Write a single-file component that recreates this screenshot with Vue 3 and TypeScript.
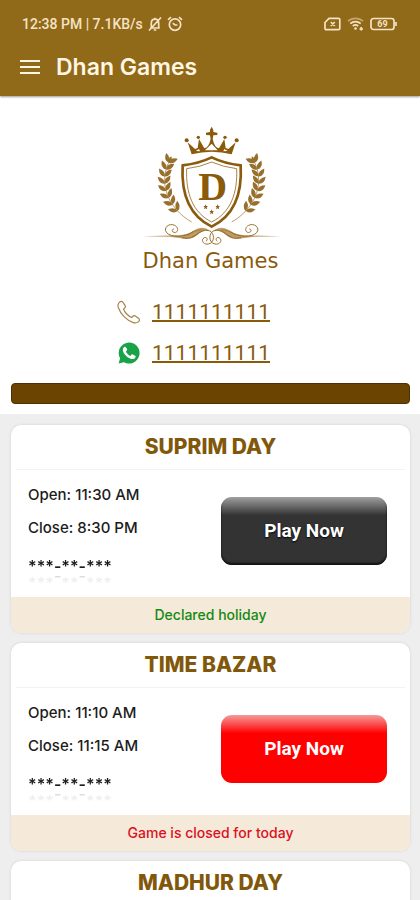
<script setup lang="ts">
interface Game {
  name: string
  open?: string
  close?: string
  result?: string
  status?: string
  closed?: boolean
}

interface Leaf {
  x: number
  y: number
  angle: number
}

const games: Game[] = [
  { name: 'SUPRIM DAY', open: '11:30 AM', close: '8:30 PM', result: '***-**-***', status: 'Declared holiday' },
  { name: 'TIME BAZAR', open: '11:10 AM', close: '11:15 AM', result: '***-**-***', status: 'Game is closed for today', closed: true },
  { name: 'MADHUR DAY' },
]

// Leaf pairs placed along the curved stem of the laurel branch
const leaves: Leaf[] = []
const stem = [[164, 308], [102, 262], [84, 190], [118, 134]]
for (let i = 0; i < 8; i++) {
  const t = 0.14 + i * 0.115
  const u = 1 - t
  const at = (k: number) =>
    u * u * u * stem[0][k] + 3 * u * u * t * stem[1][k] + 3 * u * t * t * stem[2][k] + t * t * t * stem[3][k]
  const slope = (k: number) =>
    u * u * (stem[1][k] - stem[0][k]) + 2 * u * t * (stem[2][k] - stem[1][k]) + t * t * (stem[3][k] - stem[2][k])
  const angle = (Math.atan2(slope(1), slope(0)) * 180) / Math.PI
  leaves.push({ x: at(0), y: at(1), angle: angle - 40 }, { x: at(0), y: at(1), angle: angle + 40 })
}
</script>

<template>
  <div class="app">
    <header class="header">
      <div class="status">
        <span>12:38 PM | 7.1KB/s</span>
        <svg class="ic" width="16" height="16" viewBox="0 0 16 16" aria-hidden="true">
          <path d="M3.2 12h9.6M4.3 11.500V7.200C4.300 4.700 5.800 3.200 8 3.200s3.700 1.500 3.700 4v4.500M6.700 14h2.600M8 3V1.700M2 14.500 14 1.500" />
        </svg>
        <svg class="ic alarm" width="16" height="16" viewBox="0 0 16 16" aria-hidden="true">
          <circle cx="8" cy="8.600" r="5.700" />
          <path d="M1 3.800 4 1.200M15 3.800 12 1.200M5.800 7.200 8 9h2.400" />
        </svg>
        <span class="spacer"></span>
        <svg class="ic" width="17" height="14" viewBox="0 0 17 14" aria-hidden="true">
          <path d="M5 1.300h9.500c.8 0 1.300.5 1.300 1.300v8.800c0 .8-.5 1.300-1.300 1.300H2.300c-.8 0-1.300-.5-1.300-1.300V5.500zM6.800 5l4 4M10.800 5l-4 4" />
        </svg>
        <svg class="ic wifi" width="17" height="14" viewBox="0 0 17 14" aria-hidden="true">
          <path class="faint" d="M1 4.200c4-3.700 11-3.700 15 0" />
          <path d="M3.300 6.600c3-2.700 7.400-2.700 10.400 0M5.800 9.100c1.600-1.400 3.800-1.400 5.400 0" />
          <circle class="dot" cx="8.500" cy="11.500" r="1.300" />
          <path d="M12.500 12h3.500M14.200 10v3.500" />
        </svg>
        <svg class="ic" width="28" height="14" viewBox="0 0 28 14" aria-hidden="true">
          <rect x="1" y="1.500" width="23" height="11" rx="2.500" />
          <path d="M26 5v4" />
          <text x="12.500" y="10.300" text-anchor="middle">69</text>
        </svg>
      </div>
      <div class="appbar">
        <button class="menu" type="button" aria-label="Menu">
          <svg width="20" height="14" viewBox="0 0 20 14" aria-hidden="true">
            <path d="M0 1h20M0 7h20M0 13h20" stroke="#fff6e4" stroke-width="2" />
          </svg>
        </button>
        <h1>Dhan Games</h1>
      </div>
    </header>

    <section class="hero">
      <svg class="emblem" width="160" height="133" viewBox="0 0 480 399" aria-hidden="true">
        <!-- crown -->
        <g fill="#8a5a0d">
          <path d="M182 118 170 82l22 20 8-3 4-27 16 28q14-3 19-29h6q5 26 19 29l16-28 4 27 8 3 22-20-12 36q-60-16-120 0zM194 108l13 1-3-7zM222 106h38l-18-20zM277 109l13-1-10-6z" fill-rule="evenodd" />
          <path d="M242 35q7 10 5 16l12 2v7l-12 1-2 12h-6l-2-12-12-1v-7l12-2q-2-6 5-16z" />
          <circle cx="167" cy="76" r="6" /><circle cx="317" cy="76" r="6" />
          <circle cx="202" cy="67" r="5" /><circle cx="282" cy="67" r="5" />
        </g>
        <!-- shield -->
        <g fill="none" stroke="#8a5a0d">
          <path d="M155 151q50-6 87-24 37 18 87 24c5 86-18 150-87 184-69-34-92-98-87-184z" stroke-width="8" />
          <path d="M167 161q42-5 75-20 33 15 75 20c3 72-17 131-75 160-58-29-78-88-75-160z" stroke-width="3" opacity=".75" />
        </g>
        <text x="245" y="254" class="initial" text-anchor="middle">D</text>
        <path fill="#8a5a0d" d="m224 268 2 5h5l-4 4 2 6-5-3-5 3 2-6-4-4h5zM260 268l2 5h5l-4 4 2 6-5-3-5 3 2-6-4-4h5zM242 283l2 5h5l-4 4 2 6-5-3-5 3 2-6-4-4h5z" />
        <!-- laurel and flourish, mirrored around the centre line -->
        <g v-for="side in [1, -1]" :key="side" :transform="side === 1 ? undefined : 'translate(484 0) scale(-1 1)'">
          <path d="M182 321C110 280 78 200 119 132" fill="none" stroke="#98702e" stroke-width="2" />
          <path
            v-for="(leaf, i) in leaves"
            :key="i"
            d="M0 0Q12-14 30 0 12 12 0 0z"
            fill="#98702e"
            :transform="`translate(${leaf.x} ${leaf.y}) rotate(${leaf.angle})`"
          />
          <path d="M0 0Q9-9 20 0 9 8 0 0z" fill="#98702e" transform="translate(115 143) rotate(-72)" />
          <path d="M34 364 145 361q30-3 44-15 22-15 45-1-23 2-36 16-18 16-53 8l-30-4z" fill="#bd9c66" />
          <g fill="none" stroke="#98702e" stroke-width="3" stroke-linecap="round">
            <path d="M186 350c-22 18-66 18-79 3-12-15 8-30 24-22 14 7 10 24-2 21-8-2-6-10-1-10" />
            <path d="M155 368c40 12 46-30 80-21 16 6 18 36-3 40-17 3-23-14-12-19 8-3 12 6 6 10" />
            <path d="M170 360q25-16 42-15M184 365q12-5 22-14" stroke-width="2" />
          </g>
        </g>
      </svg>
      <p class="brand">Dhan Games</p>

      <div class="contacts">
        <div class="contact">
          <svg width="24" height="24" viewBox="0 0 24 24" aria-hidden="true">
            <path d="M2.300 2.300C3.500 1 5 1 6 2.300l2 3c.8 1.100.5 2.100-.5 3l-1 .9c.8 2.800 5 7.300 8.200 8.300l.9-1c1-1 2-1.100 3.100-.3l2.800 2.100c1.300 1 1.200 2.300.1 3.300-1.500 1.400-3.400 1.600-5.300 1C9.500 20.500 3.500 14 1.300 7.500.7 5.500.9 3.700 2.300 2.300z" fill="none" stroke="#a6834a" stroke-width="1.200" />
          </svg>
          <a href="tel:1111111111">1111111111</a>
        </div>
        <div class="contact">
          <svg width="24" height="24" viewBox="0 0 24 24" aria-hidden="true">
            <path d="M12 1.500A10.500 10.500 0 1 1 7 21.200L1.600 22.500l1.500-5.200A10.500 10.500 0 0 1 12 1.500z" fill="#18a348" />
            <path d="M8.800 6.300c-.4-.8-1-.8-1.600-.4C4.600 8 6 12 9.500 15.200c3.300 3 7.300 4 8.900 1.300.5-.9.400-1.400-.3-1.800l-2.300-1.200c-.6-.3-1-.2-1.400.3l-.9 1.100c-2-.8-3.700-2.400-4.600-4.400l.9-1c.4-.5.5-.9.3-1.400z" fill="#fff" />
          </svg>
          <a href="https://wa.me/1111111111">1111111111</a>
        </div>
      </div>
      <div class="banner"></div>
    </section>

    <main class="games">
      <article v-for="game in games" :key="game.name" class="card">
        <h2>{{ game.name }}</h2>
        <template v-if="game.open">
          <div class="details">
            <div class="times">
              <p>Open: {{ game.open }}</p>
              <p>Close: {{ game.close }}</p>
              <p class="result">{{ game.result }}</p>
            </div>
            <button type="button" class="play" :class="{ closed: game.closed }">Play Now</button>
          </div>
          <p class="note" :class="{ closed: game.closed }">{{ game.status }}</p>
        </template>
      </article>
    </main>
  </div>
</template>

<style>
body {
  margin: 0;
  background: #eeeeee;
}
</style>

<style scoped>
.app {
  height: 100vh;
  overflow: hidden;
  display: flex;
  flex-direction: column;
  background: #eeeeee;
  color: #1c1c1c;
  font-family: Inter, "Liberation Sans", sans-serif;
}
h1, h2, p {
  margin: 0;
}
.header {
  flex: none;
  background: #906919;
  color: #fff6e4;
  box-shadow: 0 1px 2px rgba(0, 0, 0, 0.4);
  z-index: 1;
}
.status {
  display: flex;
  align-items: center;
  height: 48px;
  padding: 0 22px;
  gap: 4px;
  font: 500 14px/16px Roboto, sans-serif;
  color: #f5e3c4;
}
.spacer {
  flex: 1;
}
.ic {
  fill: none;
  stroke: #f5e3c4;
  stroke-width: 1.7;
}
.wifi {
  margin: 0 2px;
}
.faint {
  opacity: 0.5;
}
.dot {
  fill: #f5e3c4;
  stroke: none;
}
.ic text {
  font: 700 9px Roboto, sans-serif;
  fill: #f5e3c4;
  stroke: none;
}
.appbar {
  display: flex;
  align-items: center;
  gap: 16px;
  height: 38px;
  padding: 0 20px 10px;
}
.menu {
  display: flex;
  padding: 0;
  border: 0;
  background: none;
  cursor: pointer;
}
h1 {
  font-size: 23px;
  line-height: 32px;
  font-weight: 600;
}
.hero {
  flex: none;
  display: flex;
  flex-direction: column;
  align-items: center;
  padding: 19px 10px 10px 11px;
  background: #fff;
}
.emblem {
  display: block;
}
.brand {
  margin-top: 1px;
  font: 21px/24px "DejaVu Sans", sans-serif;
  color: #8a5a0d;
}
.initial {
  font: 700 120px "Liberation Serif", serif;
  fill: #8a5a0d;
}
.contacts {
  display: flex;
  flex-direction: column;
  margin-top: 18px;
  padding-right: 34px;
}
.contact {
  display: flex;
  align-items: center;
  gap: 11px;
  height: 41px;
}
.contact a {
  font: 400 21px/24px Roboto, sans-serif;
  color: #8a5a0d;
  text-decoration: underline 2px;
  text-underline-offset: 1px;
}
.banner {
  align-self: stretch;
  height: 21px;
  margin-top: 10px;
  box-sizing: border-box;
  border: 1px solid #4f3000;
  border-radius: 4px;
  background: #6a4400;
}
.games {
  display: flex;
  flex-direction: column;
  gap: 10px;
  padding: 11px 10px 11px 11px;
}
.card {
  flex: none;
  min-height: 208px;
  overflow: hidden;
  border-radius: 10px;
  background: #fff;
  box-shadow: 0 0 3px rgba(0, 0, 0, 0.12);
}
h2 {
  margin: 0 5px;
  border-bottom: 1px solid #f3f3f3;
  text-align: center;
  font-size: 21px;
  line-height: 44px;
  font-weight: 800;
  color: #81580b;
}
.details {
  display: flex;
  justify-content: space-between;
  align-items: center;
  height: 127px;
  padding: 0 23px 0 17px;
}
.times {
  padding-bottom: 6px;
  font-size: 15px;
  line-height: 33px;
  font-weight: 500;
}
.result {
  height: 33px;
  margin-top: 6px;
  font-size: 16px;
  line-height: 33px;
  font-weight: 600;
  -webkit-box-reflect: below -22px linear-gradient(transparent 30%, rgba(0, 0, 0, 0.45));
}
.play {
  width: 166px;
  height: 68px;
  margin-bottom: 6px;
  padding: 0;
  border: 0;
  border-radius: 11px;
  background: linear-gradient(#a0a0a0, #333 27%);
  box-shadow: inset 0 -2px 2px #111;
  font: 700 19px/24px Roboto, sans-serif;
  color: #fff;
  text-shadow: 0 1px 2px #000;
  cursor: pointer;
}
.play.closed {
  background: linear-gradient(#f59a9a, #ff0000 27%);
  box-shadow: none;
  text-shadow: none;
}
.note {
  background: #f5e9d9;
  text-align: center;
  font-size: 14px;
  line-height: 36px;
  font-weight: 500;
  color: #138a13;
}
.note.closed {
  color: #dc1022;
}
</style>
